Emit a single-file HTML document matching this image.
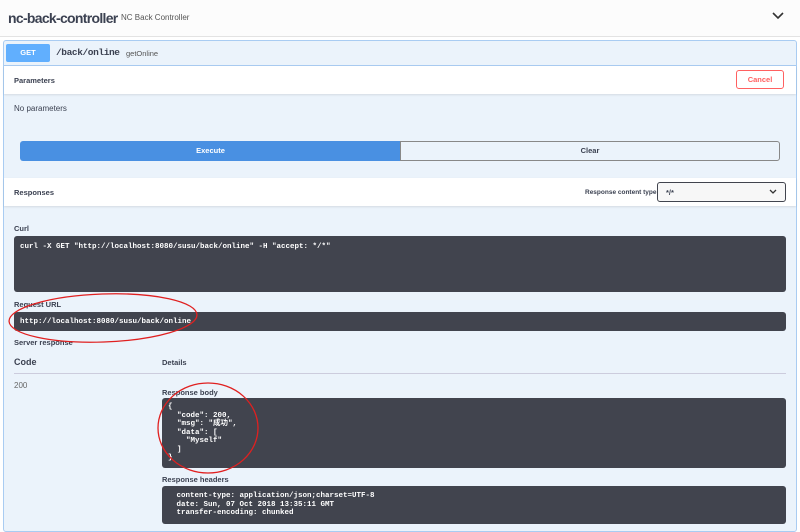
<!DOCTYPE html><html><head><meta charset="utf-8"><style>
body{margin:0;width:800px;height:527px;overflow:hidden;background:#fff;font-family:"Liberation Sans","Noto Sans CJK SC",sans-serif;position:relative;color:#3b4151}
.a{position:absolute}
.mono{font-family:"Liberation Mono","Noto Sans CJK SC",monospace}
.dark{background:#41444e;color:#fff;border-radius:3px;font-family:"Liberation Mono","Noto Sans CJK SC",monospace;font-size:7.5px;font-weight:bold;box-sizing:border-box}
.lbl{font-size:7.5px;font-weight:bold;color:#3b4151}
</style></head><body>
<div class="a" style="left:0;top:0;width:800px;height:36px;border-bottom:1px solid #e3e3e3;background:#fcfcfc"></div>
<div class="a" style="left:8px;top:10px;font-size:14px;font-weight:bold;letter-spacing:-0.7px;white-space:nowrap">nc-back-controller</div>
<div class="a" style="left:121px;top:13px;font-size:8px;color:#555">NC Back Controller</div>
<svg class="a" style="left:772px;top:12px" width="12" height="8"><path d="M1 1 L6 6 L11 1" stroke="#333" stroke-width="1.6" fill="none"/></svg>
<div class="a" style="left:3px;top:40px;width:792px;height:490px;border:1px solid #a9ccf2;background:#ebf3fb;border-radius:3px"></div>
<div class="a" style="left:4px;top:65px;width:792px;height:1px;background:#a9ccf2"></div>
<div class="a" style="left:6px;top:44px;width:44px;height:18px;background:#61affe;border-radius:2px;color:#fff;font-size:7.5px;font-weight:bold;text-align:center;line-height:18px">GET</div>
<div class="a mono" style="left:56px;top:47px;font-size:9.5px;font-weight:bold;white-space:nowrap;letter-spacing:-0.4px">/back/online</div>
<div class="a" style="left:126px;top:49px;font-size:7.5px;color:#555">getOnline</div>
<div class="a" style="left:4px;top:66px;width:792px;height:28px;background:#fff;box-shadow:0 1px 2px rgba(0,0,0,.1)"></div>
<div class="a lbl" style="left:14px;top:76px">Parameters</div>
<div class="a" style="left:736px;top:70px;width:48px;height:19px;border:1px solid #ff6060;border-radius:3px;box-sizing:border-box;color:#ff6060;font-size:7.5px;font-weight:bold;text-align:center;line-height:17px">Cancel</div>
<div class="a" style="left:14px;top:104px;font-size:8px">No parameters</div>
<div class="a" style="left:20px;top:141px;width:381px;height:20px;background:#4990e2;border-radius:3px 0 0 3px;color:#fff;font-size:7.5px;font-weight:bold;text-align:center;line-height:20px">Execute</div>
<div class="a" style="left:400px;top:141px;width:380px;height:20px;border:1px solid #888;border-radius:0 3px 3px 0;box-sizing:border-box;font-size:7.5px;font-weight:bold;text-align:center;line-height:18px">Clear</div>
<div class="a" style="left:4px;top:178px;width:792px;height:28px;background:#fff;box-shadow:0 1px 2px rgba(0,0,0,.1)"></div>
<div class="a lbl" style="left:14px;top:188px">Responses</div>
<div class="a" style="left:585px;top:189px;font-size:6.5px;font-weight:bold">Response content type</div>
<div class="a" style="left:657px;top:182px;width:129px;height:20px;border:1.5px solid #41444e;border-radius:3px;box-sizing:border-box;background:#f7f7f7;font-size:7.5px;font-weight:bold;padding:5px 0 0 8px">*/*</div>
<svg class="a" style="left:769px;top:189px" width="8" height="6"><path d="M1 1 L4 4 L7 1" stroke="#333" stroke-width="1.3" fill="none"/></svg>
<div class="a lbl" style="left:14px;top:224px">Curl</div>
<div class="a dark" style="left:14px;top:236px;width:772px;height:56px;padding:7px 6px">curl -X GET "http://localhost:8080/susu/back/online" -H "accept: */*"</div>
<div class="a lbl" style="left:14px;top:300px">Request URL</div>
<div class="a dark" style="left:14px;top:312px;width:772px;height:19px;padding:6px 6px">http://localhost:8080/susu/back/online</div>
<div class="a lbl" style="left:14px;top:338px">Server response</div>
<div class="a" style="left:14px;top:357px;font-size:9px;font-weight:bold">Code</div>
<div class="a lbl" style="left:162px;top:358px">Details</div>
<div class="a" style="left:14px;top:373px;width:772px;height:1px;background:#ccd"></div>
<div class="a" style="left:14px;top:381px;font-size:8px;color:#666">200</div>
<div class="a lbl" style="left:162px;top:388px">Response body</div>
<div class="a dark" style="left:162px;top:398px;width:624px;height:70px;padding:5px 6px;line-height:8.5px;white-space:pre">{
  "code": 200,
  "msg": "成功",
  "data": [
    "Myself"
  ]
}</div>
<div class="a lbl" style="left:162px;top:475px">Response headers</div>
<div class="a dark" style="left:162px;top:486px;width:624px;height:38px;padding:6px 10px;line-height:8.5px;white-space:pre"> content-type: application/json;charset=UTF-8
 date: Sun, 07 Oct 2018 13:35:11 GMT
 transfer-encoding: chunked</div>
<svg class="a" style="left:0;top:0" width="800" height="527"><ellipse cx="103" cy="318" rx="94" ry="24" stroke="#e02020" stroke-width="1.3" fill="none" transform="rotate(-2 103 318)"/><ellipse cx="208" cy="428" rx="50" ry="45" stroke="#e02020" stroke-width="1.3" fill="none"/></svg>
</body></html>
